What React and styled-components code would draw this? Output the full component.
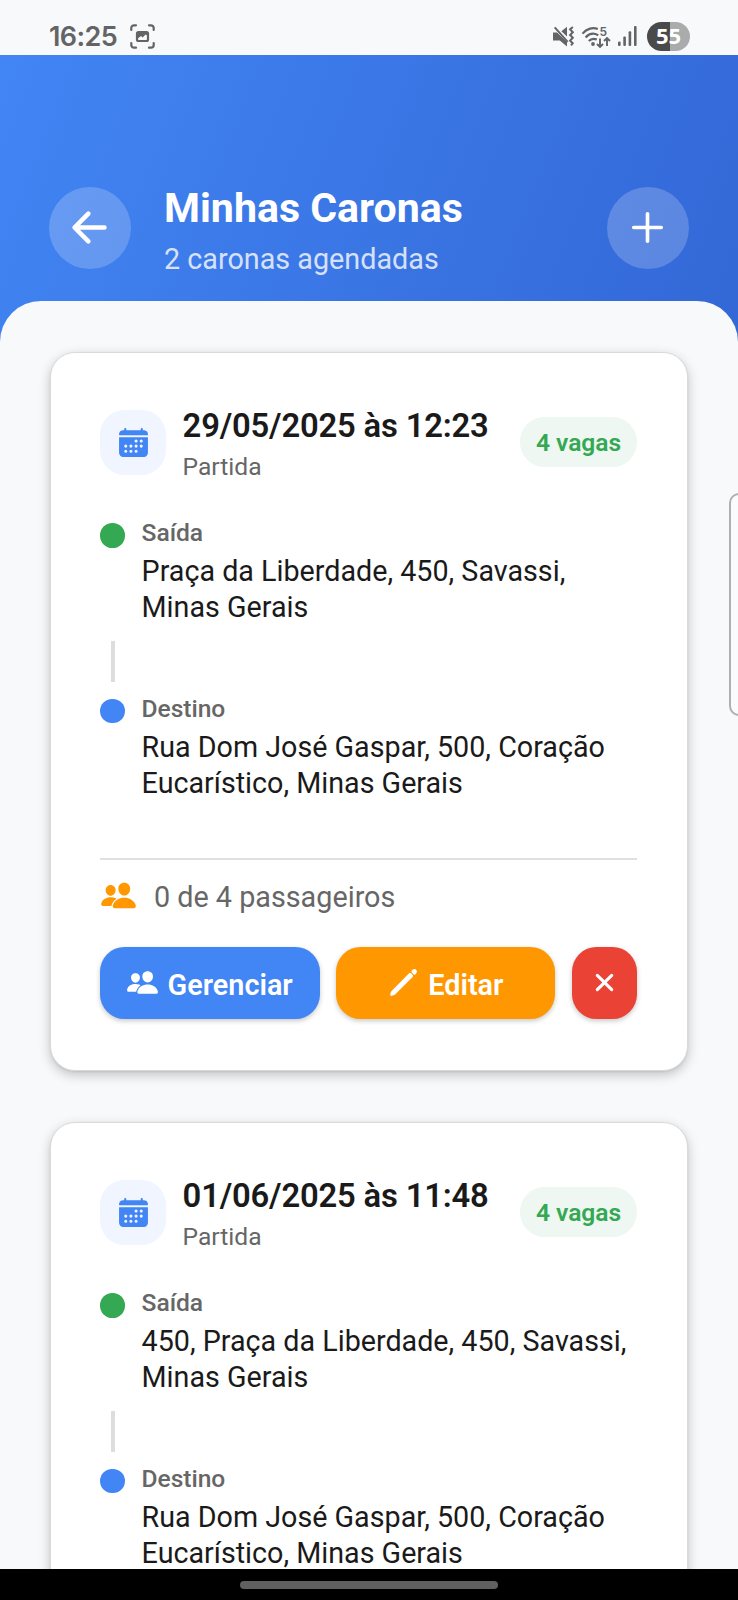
import React from 'react';
import styled, { createGlobalStyle } from 'styled-components';
import { IoAdd, IoArrowBack, IoCalendar, IoClose, IoPeople, IoPencil } from 'react-icons/io5';

const Global = createGlobalStyle`
  *, *::before, *::after { box-sizing: border-box; }
  body { margin: 0; background: #f8f9fb; font-family: Roboto, sans-serif; }
  button { font: inherit; border: 0; padding: 0; margin: 0; color: inherit; }
  svg { display: block; flex: none; }
`;

const Screen = styled.div`
  position: relative;
  width: 738px;
  height: 1600px;
  overflow: hidden;
  display: flex;
  flex-direction: column;
  background: #f8f9fb;
`;

const StatusBar = styled.div`
  flex: none;
  height: 55px;
  padding: 17px 48px 0 49px;
  display: flex;
  justify-content: space-between;
  color: #636466;
`;

const StatusGroup = styled.div`
  display: flex;
  align-items: center;
  height: 38px;
  gap: ${(p) => p.$gap}px;
`;

const Clock = styled.span`
  font: 600 27px/38px Inter, sans-serif;
  letter-spacing: -0.6px;
  width: 69px;
  padding-top: 1px;
  white-space: nowrap;
`;

const Battery = styled.div`
  width: 43px;
  height: 29px;
  margin-left: 3px;
  border-radius: 15px;
  background: linear-gradient(90deg, #4a4a4b 0 54%, #aaabac 54%);
  color: #fff;
  font: 700 22px/27px "Open Sans", sans-serif;
  text-align: center;
`;

const Header = styled.header`
  flex: none;
  height: 287px;
  padding: 132px 49px 0;
  display: flex;
  align-items: flex-start;
  background: linear-gradient(111.3deg, #4285f4, #3367d6);
  color: #fff;
`;

const RoundButton = styled.button`
  width: 82px;
  height: 82px;
  border-radius: 50%;
  display: flex;
  align-items: center;
  justify-content: center;
  background: rgba(255, 255, 255, 0.2);
  color: #fff;

  svg { margin: -1px 0 0 -1px; }
`;

const Heading = styled.div`
  flex: 1;
  padding-left: 33px;
`;

const Title = styled.h1`
  margin: -3px 0 0;
  font-size: 41.1px;
  font-weight: 700;
  line-height: 48px;
`;

const Subtitle = styled.p`
  margin: 10px 0 0;
  font-size: 28.75px;
  line-height: 34px;
  color: rgba(255, 255, 255, 0.8);
`;

const Sheet = styled.main`
  flex: 1;
  min-height: 0;
  margin-top: -41px;
  padding: 51px 50px 0 50px;
  overflow: hidden;
  border-radius: 41px 41px 0 0;
  background: #f8f9fb;
  display: flex;
  flex-direction: column;
  gap: 51px;
`;

const Card = styled.article`
  flex: none;
  height: 719px;
  padding: 50.5px 49.6px 50.5px 49.4px;
  border: 1px solid #d9dadc;
  border-radius: 25px;
  background: #fff;
  box-shadow: 0 4px 12px rgba(0, 0, 0, 0.22), 0 1px 2px rgba(0, 0, 0, 0.08);
`;

const CardTop = styled.div`
  display: flex;
  align-items: center;
  height: 78px;
`;

const DateBadge = styled.div`
  width: 65.6px;
  height: 65.6px;
  border-radius: 24.6px;
  display: flex;
  align-items: center;
  justify-content: center;
  background: #f0f5ff;
  color: #4285f4;
`;

const Departure = styled.div`
  flex: 1;
  padding-left: 16.6px;
`;

const DateText = styled.div`
  font-size: 32.8px;
  font-weight: 600;
  letter-spacing: -0.18px;
  line-height: 44px;
  color: #1a1a1a;
  white-space: nowrap;
`;

const Caption = styled.div`
  margin-top: 4px;
  font-size: 24.6px;
  line-height: 30px;
  color: #666;
`;

const Seats = styled.span`
  height: 50px;
  margin-top: -1px;
  padding: 2px 16.4px 0;
  border-radius: 24.6px;
  background: #eef7f1;
  color: #34a853;
  font-size: 24.6px;
  font-weight: 600;
  line-height: 48px;
  letter-spacing: -0.05px;
  white-space: nowrap;
`;

const Route = styled.div`
  margin-top: 37px;
`;

const Stop = styled.div`
  display: flex;
  align-items: flex-start;
  gap: 16.6px;
  height: 106px;
`;

const Dot = styled.span`
  flex: none;
  width: 24.6px;
  height: 24.6px;
  margin-top: 4.6px;
  border-radius: 50%;
  background: ${(p) => p.$color};
`;

const StopLabel = styled.div`
  margin-top: -0.5px;
  font-size: 24.6px;
  font-weight: 500;
  letter-spacing: -0.05px;
  line-height: 29px;
  color: #666;
`;

const Address = styled.div`
  margin-top: 7.3px;
  font-size: 28.7px;
  line-height: 35.8px;
  color: #1a1a1a;
  white-space: pre-line;
`;

const Connector = styled.div`
  width: 4px;
  height: 41px;
  margin: 16.5px 0 12px 10.4px;
  background: #ddd;
`;

const Passengers = styled.div`
  display: flex;
  align-items: center;
  gap: 16.6px;
  margin-top: 57.5px;
  padding-top: 20px;
  border-top: 2px solid #e0e0e0;
  font-size: 28.75px;
  line-height: 34px;
  color: #666;

  svg { color: #ff9800; margin-top: -3px; }
`;

const Actions = styled.div`
  display: flex;
  gap: 16.4px;
  margin-top: 33px;
`;

const ActionButton = styled.button`
  flex: ${(p) => (p.$compact ? '0 0 65.6px' : '1')};
  height: 72px;
  border-radius: 24.6px;
  display: flex;
  align-items: center;
  justify-content: center;
  gap: 8.2px;
  background: ${(p) => p.$color};
  color: #fff;
  font-size: 28.8px;
  font-weight: 600;
  box-shadow: 0 2px 5px rgba(0, 0, 0, 0.22);

  svg { margin: 0 0 0 -1px; }
  span { margin-top: 4px; }
`;

const EdgeHandle = styled.div`
  position: absolute;
  top: 493px;
  right: -12px;
  width: 21px;
  height: 223px;
  border: 2px solid #aeb0b2;
  border-radius: 10px;
  background: #fafbfc;
`;

const NavBar = styled.div`
  flex: none;
  height: 31px;
  display: flex;
  justify-content: center;
  background: #000;
`;

const NavHandle = styled.div`
  width: 258px;
  height: 8px;
  margin-top: 12px;
  border-radius: 4px;
  background: #606060;
`;

const PlusIcon = styled(IoAdd)`
  path { stroke-width: 38px; }
`;

const ScreenshotIcon = () => (
  <svg width="25" height="25" viewBox="0 0 25 25" fill="none" stroke="currentColor" strokeWidth="2.2" strokeLinecap="round">
    <path d="M1.3 6V4a2.7 2.7 0 0 1 2.7-2.7h2M19 1.3h2A2.7 2.7 0 0 1 23.7 4v2M23.7 19v2a2.7 2.7 0 0 1-2.7 2.7h-2M6 23.7H4A2.7 2.7 0 0 1 1.3 21v-2" />
    <rect x="7" y="8" width="11" height="9" rx="1.5" />
    <path d="M7 8h11v4l-2.4-1.4-3 3-1.6-1.6-4 3z" fill="currentColor" stroke="none" />
  </svg>
);

const MuteIcon = () => (
  <svg width="21" height="21" viewBox="0 0 21 21">
    <path d="M0 6.5h4L14 16v4.5L6.8 14.5H0zM8.4 5.2 14 .7v9.8z" fill="currentColor" />
    <path d="m1.7 1.4 13 14.4" stroke="currentColor" strokeWidth="2" />
    <path d="m19.8 1-2.7 2.4 2.7 2.8-2.7 2.8 2.7 2.8-2.7 2.8 2.7 2.6-1.8 2.2" fill="none" stroke="currentColor" strokeWidth="2" />
  </svg>
);

const WifiLabel = styled.text`
  font: 600 12px Inter, sans-serif;
`;

const WifiIcon = () => (
  <svg width="30" height="25" viewBox="0 -2 30 25" fill="none" stroke="currentColor" strokeWidth="2.2">
    <path d="M1.5 7.6C5.8 2.4 12 1.2 16.8 3M4.6 11.4c3.6-4 8.4-4.6 12.6-2.2M7.8 15c2.4-2.4 5.2-2.8 8-1.4" />
    <circle cx="12" cy="18" r="1.9" fill="currentColor" stroke="none" />
    <path d="M19 12.5V21m-3-3 3 3 3-3M26 20V12m-3 3 3-3 3 3" strokeWidth="1.9" />
    <WifiLabel x="18.4" y="10" fill="currentColor" stroke="none">5</WifiLabel>
  </svg>
);

const SignalIcon = () => (
  <svg width="19" height="20" viewBox="0 0 19 20" fill="currentColor">
    <rect x="0" y="15.5" width="2.6" height="4.5" rx="1" />
    <rect x="5.3" y="10.5" width="2.6" height="9.5" rx="1" />
    <rect x="10.6" y="5.3" width="2.6" height="14.7" rx="1" />
    <rect x="16" y="0" width="2.6" height="20" rx="1" />
  </svg>
);

const rides = [
  {
    date: '29/05/2025 às 12:23',
    from: 'Praça da Liberdade, 450, Savassi,\nMinas Gerais',
    to: 'Rua Dom José Gaspar, 500, Coração\nEucarístico, Minas Gerais',
  },
  {
    date: '01/06/2025 às 11:48',
    from: '450, Praça da Liberdade, 450, Savassi,\nMinas Gerais',
    to: 'Rua Dom José Gaspar, 500, Coração\nEucarístico, Minas Gerais',
  },
];

function RouteStop({ color, label, address }) {
  return (
    <Stop>
      <Dot $color={color} />
      <div>
        <StopLabel>{label}</StopLabel>
        <Address>{address}</Address>
      </div>
    </Stop>
  );
}

function RideCard({ ride }) {
  return (
    <Card>
      <CardTop>
        <DateBadge><IoCalendar size={33} /></DateBadge>
        <Departure>
          <DateText>{ride.date}</DateText>
          <Caption>Partida</Caption>
        </Departure>
        <Seats>4 vagas</Seats>
      </CardTop>
      <Route>
        <RouteStop color="#34a853" label="Saída" address={ride.from} />
        <Connector />
        <RouteStop color="#4285f4" label="Destino" address={ride.to} />
      </Route>
      <Passengers>
        <IoPeople size={37} />
        <span>0 de 4 passageiros</span>
      </Passengers>
      <Actions>
        <ActionButton $color="#4285f4"><IoPeople size={33} /><span>Gerenciar</span></ActionButton>
        <ActionButton $color="#ff9800"><IoPencil size={33} /><span>Editar</span></ActionButton>
        <ActionButton $color="#ea4335" $compact aria-label="Cancelar"><IoClose size={33} /></ActionButton>
      </Actions>
    </Card>
  );
}

export default function App() {
  return (
    <Screen>
      <Global />
      <StatusBar>
        <StatusGroup $gap={12}>
          <Clock>16:25</Clock>
          <ScreenshotIcon />
        </StatusGroup>
        <StatusGroup $gap={7}>
          <MuteIcon />
          <WifiIcon />
          <SignalIcon />
          <Battery>55</Battery>
        </StatusGroup>
      </StatusBar>
      <Header>
        <RoundButton aria-label="Voltar"><IoArrowBack size={49} /></RoundButton>
        <Heading>
          <Title>Minhas Caronas</Title>
          <Subtitle>2 caronas agendadas</Subtitle>
        </Heading>
        <RoundButton aria-label="Adicionar"><PlusIcon size={49} /></RoundButton>
      </Header>
      <Sheet>
        {rides.map((ride) => <RideCard key={ride.date} ride={ride} />)}
      </Sheet>
      <NavBar><NavHandle /></NavBar>
      <EdgeHandle />
    </Screen>
  );
}
